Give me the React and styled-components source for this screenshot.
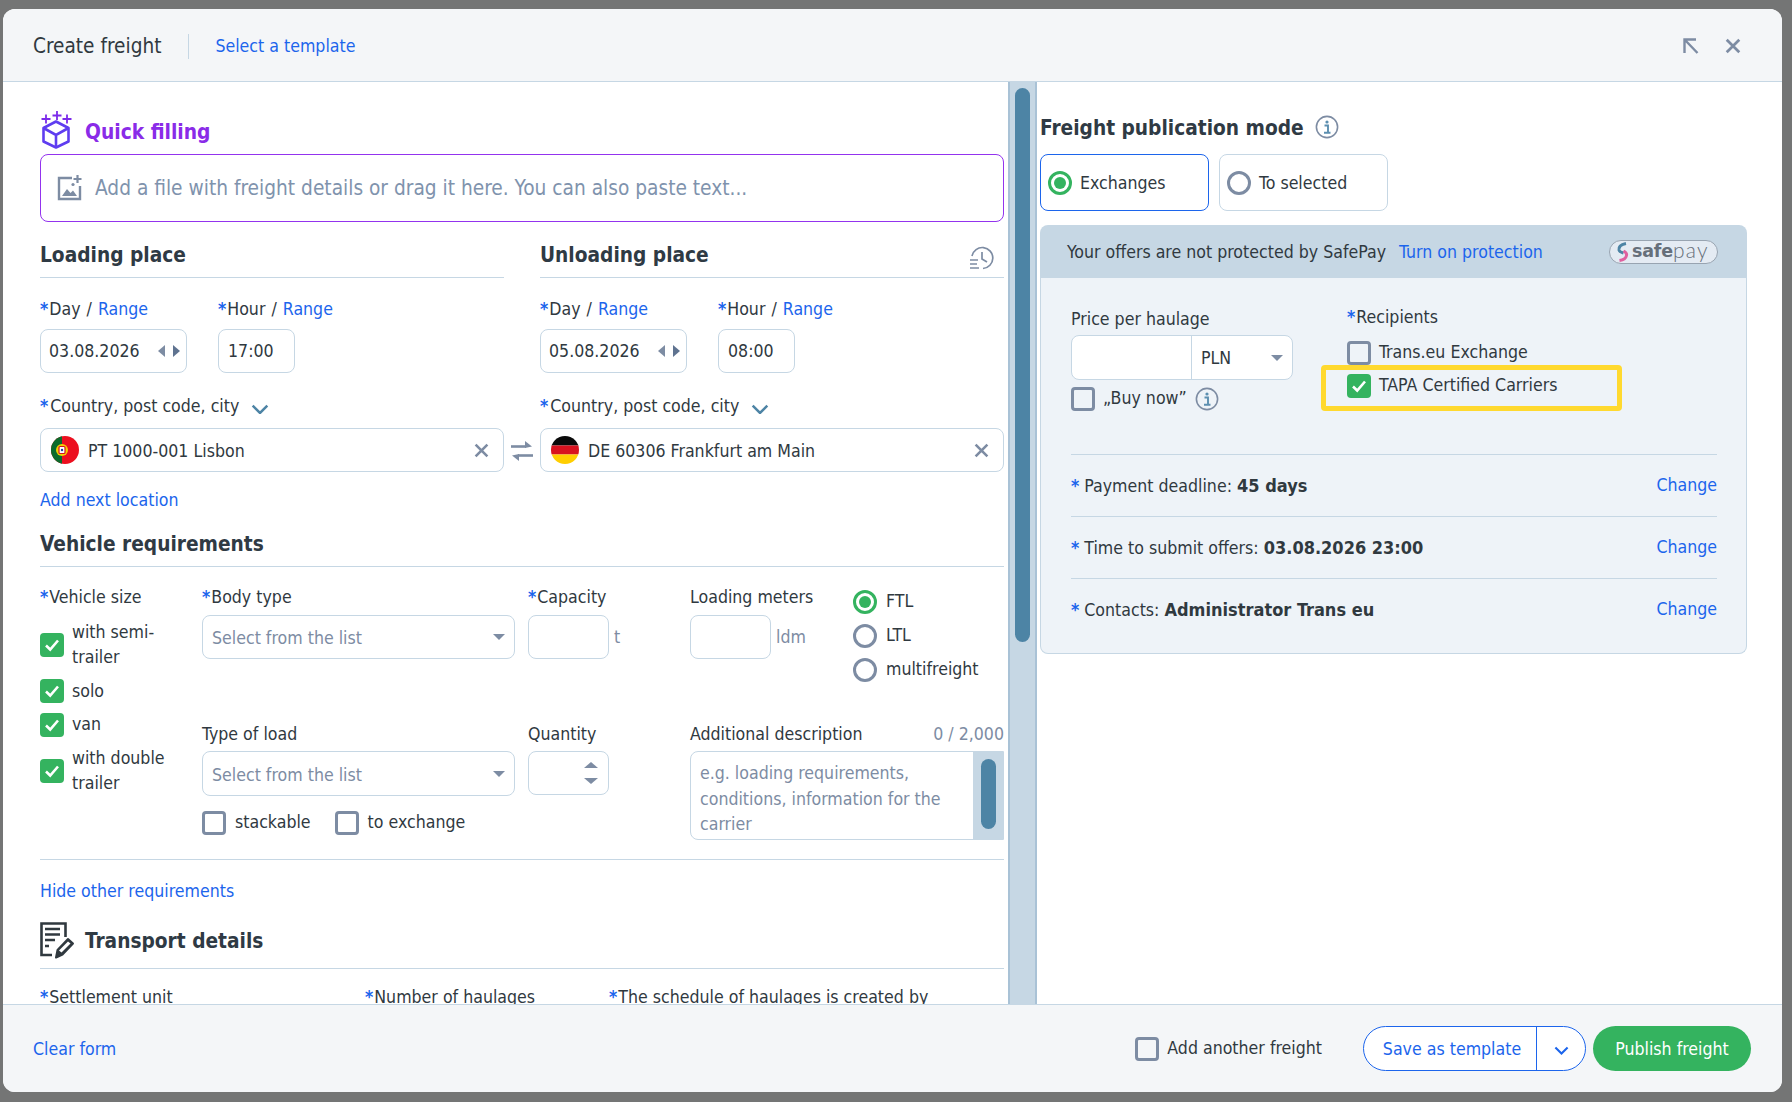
import React from 'react';
import styled, { createGlobalStyle } from 'styled-components';

const BLUE = '#1c65ec';
const LINE = '#c6d7e4';
const INK = '#30393f';
const GREEN = '#34b35f';
const SLATE = '#7d8ca3';

const Global = createGlobalStyle`
  html, body { margin: 0; padding: 0; }
  body {
    background: #747575;
    font-family: "DejaVu Sans Condensed", "DejaVu Sans", sans-serif;
    color: ${INK};
    font-size: 17.6px;
  }
  * { box-sizing: border-box; }
`;

const Backdrop = styled.div`
  width: 1792px;
  height: 1102px;
  padding: 9px 10px 10px 3px;
  overflow: hidden;
`;

const Modal = styled.div`
  height: 1083px;
  background: #fff;
  border-radius: 12px;
  display: flex;
  flex-direction: column;
  overflow: hidden;
`;

const Header = styled.header`
  height: 73px;
  flex: none;
  background: #f4f6f8;
  border-bottom: 1px solid ${LINE};
  display: flex;
  align-items: center;
  padding: 2px 41px 0 30px;
`;

const Title = styled.h1`
  margin: 0;
  font-size: 20.6px;
  font-weight: 400;
`;

const HeaderRule = styled.span`
  width: 1px;
  height: 25px;
  background: ${LINE};
  margin: 0 26px 0 27px;
`;

const Link = styled.a`
  color: ${BLUE};
  cursor: pointer;
`;

const HeaderIcons = styled.div`
  margin-left: auto;
  display: flex;
  align-items: center;
  gap: 26px;
`;

const Body = styled.div`
  flex: 1;
  min-height: 0;
  display: flex;
`;

const LeftPane = styled.div`
  width: 1005px;
  flex: none;
  padding: 29px 4px 0 37px;
  overflow: hidden;
`;

const Track = styled.div`
  width: 29px;
  flex: none;
  background: ${LINE};
  border-left: 2px solid #a9c2d6;
  border-right: 2px solid #a9c2d6;
  padding: 6px 5px 0;
`;

const Thumb = styled.div`
  width: 15px;
  height: 554px;
  background: #4d84a5;
  border-radius: 8px;
`;

const RightPane = styled.div`
  flex: 1;
  padding: 30px 35px 0 3px;
`;

const QuickRow = styled.div`
  height: 38px;
  display: flex;
  align-items: center;
  gap: 13px;
  font-size: 20.8px;
  font-weight: 700;
  color: #8a2be8;
`;

const QuickText = styled.span`
  padding-top: 4px;
`;

const DropZone = styled.div`
  margin-top: 5px;
  height: 68px;
  border: 1.5px solid #9333ee;
  border-radius: 8px;
  display: flex;
  align-items: center;
  gap: 13px;
  padding-left: 16px;
  font-size: 20.7px;
  color: #7f93ad;
`;

const PlaceGrid = styled.div`
  margin-top: 18px;
  display: grid;
  grid-template-columns: 464px 464px;
  column-gap: 36px;
`;

const PlaceColumn = styled.div`
  position: relative;
`;

const SectionTitle = styled.h2`
  margin: 0;
  height: ${p => p.$height || 38}px;
  border-bottom: 1px solid ${LINE};
  font-size: 20.7px;
  line-height: 30px;
  font-weight: 700;
  display: flex;
  align-items: flex-start;
  justify-content: space-between;
  color: #2f3a44;
`;

const HistorySlot = styled.span`
  margin: 5px 9px 0 0;
  line-height: 0;
`;

const DateRow = styled.div`
  margin-top: 20px;
  display: flex;
  gap: 31px;
`;

const Field = styled.div`
  width: ${p => p.$width ? `${p.$width}px` : 'auto'};
`;

const Label = styled.div`
  height: 22px;
  line-height: 22px;
  white-space: nowrap;
  display: flex;
  align-items: center;
`;

const Star = styled.span`
  color: ${BLUE};
  font-weight: 700;
  margin-right: ${p => p.$gap || 1}px;
`;

const Slash = styled.span`
  margin: 0 6px;
`;

const Box = styled.div`
  height: ${p => p.$height || 44}px;
  width: ${p => p.$width ? `${p.$width}px` : '100%'};
  margin-top: ${p => p.$top ?? 9}px;
  background: #fff;
  border: 1px solid ${LINE};
  border-radius: 8px;
  display: flex;
  align-items: center;
  padding: 0 9px;
  flex: none;
`;

const DateText = styled.span`
  margin-left: -1px;
`;

const Arrows = styled.span`
  margin: 0 -3px 0 auto;
  display: flex;
  gap: 8px;
`;

const CountryLabel = styled(Label)`
  margin-top: 22px;
  gap: 12px;
`;

const ChevronSlot = styled.span`
  line-height: 0;
  margin-top: ${p => p.$top || 0}px;
`;

const FlagSlot = styled.span`
  margin-left: 1px;
  line-height: 0;
`;

const PlaceName = styled.span`
  margin-left: 9px;
  padding-top: 2px;
  flex: 1;
`;

const ClearSlot = styled.span`
  line-height: 0;
  margin-right: 5px;
`;

const Swap = styled.span`
  position: absolute;
  right: -29px;
  bottom: 10px;
  line-height: 0;
`;

const AddLink = styled.div`
  margin-top: 17px;
  height: 22px;
  line-height: 22px;
`;

const VehicleTitle = styled(SectionTitle)`
  margin-top: 17px;
  line-height: 32px;
`;

const VehicleGrid = styled.div`
  margin-top: 19px;
  display: grid;
  grid-template-columns: 162px 326px 162px 314px;
  grid-template-rows: 137px 117px;
`;

const SizeColumn = styled.div`
  grid-row: 1 / span 2;
`;

const SizeList = styled.div`
  margin-top: 12px;
  display: flex;
  flex-direction: column;
  gap: 8.5px;
`;

const OptionRow = styled.label`
  display: flex;
  align-items: center;
  gap: 8px;
  line-height: 25px;
  min-height: 24px;
`;

const SizeText = styled.span`
  width: 100px;
`;

const CheckBox = styled.span`
  width: 24px;
  height: 24px;
  flex: none;
  border-radius: 4px;
  background: ${p => p.$on ? GREEN : 'transparent'};
  border: ${p => p.$on ? 'none' : `3px solid ${SLATE}`};
  display: inline-flex;
  align-items: center;
  justify-content: center;
`;

const RadioDot = styled.span`
  width: 24px;
  height: 24px;
  flex: none;
  border-radius: 50%;
  border: 3px solid ${p => p.$on ? GREEN : SLATE};
  display: inline-flex;
  align-items: center;
  justify-content: center;
  &::after {
    content: '';
    width: 12px;
    height: 12px;
    border-radius: 50%;
    background: ${p => p.$on ? GREEN : 'transparent'};
  }
`;

const Placeholder = styled.span`
  color: ${SLATE};
  padding-top: 2px;
`;

const Caret = styled.span`
  margin-left: auto;
  width: 0;
  height: 0;
  border-left: 6px solid transparent;
  border-right: 6px solid transparent;
  border-top: 6px solid ${SLATE};
`;

const Steppers = styled.span`
  margin-left: auto;
  display: flex;
  flex-direction: column;
  gap: 10px;
  margin-right: 1px;
`;

const Tri = styled.span`
  width: 0;
  height: 0;
  border-left: 7px solid transparent;
  border-right: 7px solid transparent;
  ${p => p.$up ? 'border-bottom' : 'border-top'}: 6px solid ${SLATE};
`;

const UnitRow = styled.div`
  margin-top: 7px;
  display: flex;
  align-items: center;
  gap: 5px;
  color: ${SLATE};
`;

const MetersRow = styled.div`
  display: flex;
`;

const MetersField = styled.div`
  width: 163px;
`;

const RadioList = styled.div`
  margin-top: 3px;
  display: flex;
  flex-direction: column;
  gap: 9px;
`;

const RadioOption = styled(OptionRow)`
  gap: 9px;
`;

const LoadOptions = styled.div`
  margin-top: 14px;
  display: flex;
  gap: 24px;
`;

const LoadOption = styled(OptionRow)`
  gap: 9px;
`;

const DescLabel = styled(Label)`
  justify-content: space-between;
`;

const Counter = styled.span`
  color: ${SLATE};
`;

const TextArea = styled.div`
  margin-top: 6px;
  height: 89px;
  border: 1px solid ${LINE};
  border-radius: 8px 0 0 8px;
  display: flex;
  overflow: hidden;
`;

const AreaText = styled.div`
  flex: 1;
  padding: 9px 9px 0;
  line-height: 25.5px;
  color: ${SLATE};
`;

const AreaTrack = styled.div`
  width: 30px;
  flex: none;
  background: ${LINE};
  padding: 7px 7px 0 8px;
`;

const AreaThumb = styled.div`
  height: 70px;
  background: #4d84a5;
  border-radius: 8px;
`;

const HideRow = styled.div`
  margin-top: 19px;
  border-top: 1px solid ${LINE};
  padding-top: 20px;
  height: 43px;
  line-height: 22px;
`;

const TransportTitle = styled.h2`
  margin: 18px 0 0;
  height: 49px;
  border-bottom: 1px solid ${LINE};
  display: flex;
  align-items: flex-start;
  gap: 9px;
  font-size: 20.7px;
  font-weight: 700;
  line-height: 42px;
  color: #2f3a44;
`;

const DocSlot = styled.span`
  margin-top: 2px;
  line-height: 0;
`;

const SettleRow = styled.div`
  margin-top: 17px;
  display: grid;
  grid-template-columns: 325px 244px 1fr;
`;

const ModeHeading = styled.h2`
  margin: 0;
  height: 30px;
  display: flex;
  align-items: center;
  gap: 11px;
  font-size: 20.7px;
  font-weight: 700;
  color: #2f3a44;
`;

const ModeText = styled.span`
  padding-top: 2px;
`;

const ModeCards = styled.div`
  margin-top: 12px;
  display: flex;
  gap: 10px;
`;

const ModeCard = styled.div`
  width: 169px;
  height: 57px;
  border: 1px solid ${p => p.$on ? BLUE : LINE};
  border-radius: 8px;
  display: flex;
  align-items: center;
  gap: 8px;
  padding-left: 7px;
`;

const Panel = styled.section`
  margin-top: 14px;
  width: 707px;
`;

const PanelTop = styled.div`
  height: 53px;
  background: ${LINE};
  border-radius: 8px 8px 0 0;
  display: flex;
  align-items: center;
  padding: 0 29px 0 27px;
  gap: 13px;
`;

const SafepayPill = styled.span`
  margin-left: auto;
  width: 109px;
  height: 24px;
  border: 1px solid #98a4b1;
  border-radius: 12px;
  background: #e4ebf3;
  display: flex;
  align-items: center;
  padding-left: 6px;
  gap: 3px;
  line-height: 1;
`;

const SafeWord = styled.b`
  font-family: "DejaVu Sans", sans-serif;
  font-size: 17.5px;
  font-weight: 700;
  color: #666f7a;
  letter-spacing: -0.2px;
`;

const PayWord = styled.span`
  font-family: Lato, sans-serif;
  font-size: 21px;
  font-weight: 300;
  color: #666f7a;
  margin: -4px 0 0 -3px;
  letter-spacing: 1.2px;
`;

const PanelBody = styled.div`
  background: #eef3f8;
  border: 1px solid ${LINE};
  border-top: none;
  border-radius: 0 0 8px 8px;
  padding: 28px 29px 13px 30px;
`;

const OfferGrid = styled.div`
  display: grid;
  grid-template-columns: 276px 1fr;
  margin-bottom: 43px;
`;

const PriceLabel = styled(Label)`
  margin-top: 2px;
`;

const PriceGroup = styled.div`
  margin-top: 5px;
  width: 222px;
  height: 45px;
  background: #fff;
  border: 1px solid ${LINE};
  border-radius: 8px;
  display: flex;
`;

const PriceInput = styled.div`
  width: 120px;
  border-right: 1px solid ${LINE};
`;

const Currency = styled.div`
  flex: 1;
  display: flex;
  align-items: center;
  padding: 0 9px;
`;

const BuyRow = styled(OptionRow)`
  margin-top: 6px;
`;

const RecipientList = styled.div`
  margin-top: 12px;
`;

const Highlight = styled.div`
  margin-left: -26px;
  width: 301px;
  height: 46px;
  border: 5px solid #ffd92f;
  border-radius: 4px;
  padding: 3px 0 0 21px;
`;

const TermRow = styled.div`
  height: 62px;
  border-top: 1px solid ${LINE};
  padding-bottom: 1px;
  display: flex;
  align-items: center;
  justify-content: space-between;
`;

const TermText = styled.span`
  b { font-weight: 700; font-size: 18px; }
`;

const Footer = styled.footer`
  height: 88px;
  flex: none;
  background: #f4f6f8;
  border-top: 1px solid ${LINE};
  display: flex;
  align-items: center;
  padding: 0 31px 0 30px;
`;

const FooterRight = styled.div`
  margin-left: auto;
  display: flex;
  align-items: center;
`;

const AnotherRow = styled(OptionRow)`
  gap: 8px;
  margin-right: 41px;
`;

const SplitButton = styled.div`
  width: 223px;
  height: 45px;
  background: #fff;
  border: 1px solid ${BLUE};
  border-radius: 23px;
  display: flex;
  align-items: center;
  color: ${BLUE};
  margin-right: 7px;
`;

const SplitMain = styled.span`
  width: 173px;
  height: 100%;
  border-right: 1px solid ${BLUE};
  display: flex;
  align-items: center;
  justify-content: center;
  padding-left: 4px;
`;

const SplitMore = styled.span`
  flex: 1;
  display: flex;
  align-items: center;
  justify-content: center;
  padding-top: 3px;
`;

const Publish = styled.button`
  width: 158px;
  height: 45px;
  border: none;
  border-radius: 23px;
  background: ${GREEN};
  color: #fff;
  font: inherit;
`;

const Tick = () => (
  <svg width="16" height="14" viewBox="0 0 16 14" fill="none">
    <path d="M2 7.5 6.2 11.5 14 2.5" stroke="#fff" strokeWidth="2.6" />
  </svg>
);

const Check = ({ on }) => <CheckBox $on={on}>{on && <Tick />}</CheckBox>;

const CloseIcon = ({ size = 15, color = SLATE }) => (
  <svg width={size} height={size} viewBox="0 0 14 14" fill="none">
    <path d="M1.5 1.5 12.5 12.5M12.5 1.5 1.5 12.5" stroke={color} strokeWidth="2.4" />
  </svg>
);

const Chevron = ({ color = '#4d84a5', width = 18 }) => (
  <svg width={width} height={width * 0.6} viewBox="0 0 16 9.6" fill="none">
    <path d="M1.5 1.5 8 8 14.5 1.5" stroke={color} strokeWidth="2.2" />
  </svg>
);

const InfoIcon = () => (
  <svg width="24" height="24" viewBox="0 0 24 24" fill="none">
    <circle cx="12" cy="12" r="10.6" stroke={SLATE} strokeWidth="1.6" />
    <circle cx="12" cy="7" r="1.6" fill="#5c8fb0" />
    <path d="M9.5 10.5H13V17.5M9 17.8H15.5" stroke="#5c8fb0" strokeWidth="1.9" />
  </svg>
);

const DateArrows = () => (
  <Arrows>
    <svg width="7" height="12" viewBox="0 0 7 12"><path d="M7 0V12L0 6Z" fill={SLATE} /></svg>
    <svg width="7" height="12" viewBox="0 0 7 12"><path d="M0 0V12L7 6Z" fill="#5f7390" /></svg>
  </Arrows>
);

const CubeIcon = () => (
  <svg width="32" height="38" viewBox="0 0 32 38" fill="none">
    <path d="M16 10.5 28.5 17V30.5L16 36.5 3.5 30.5V17Z" stroke="#5f3df0" strokeWidth="2.6" strokeLinejoin="round" />
    <path d="M3.5 17 16 24 28.5 17M16 24V36" stroke="#5f3df0" strokeWidth="2.6" />
    <path d="M17 0V9M12.5 4.5H21.5M6 3.5V12.5M1.5 8H10.5M27 3.5V12.5M22.5 8H31.5" stroke="#7c2bea" strokeWidth="1.8" />
  </svg>
);

const ImageAddIcon = () => (
  <svg width="25" height="26" viewBox="0 0 25 26" fill="none">
    <path d="M15 3H2V24H23V11" stroke={SLATE} strokeWidth="2.4" />
    <path d="M20.5 0V8M16.5 4H24.5" stroke={SLATE} strokeWidth="2.2" />
    <path d="M5 21 10 14 13.5 18 16 15.5 20 21Z" fill={SLATE} />
    <circle cx="16" cy="9.5" r="1.6" fill={SLATE} />
  </svg>
);

const HistoryIcon = () => (
  <svg width="26" height="26" viewBox="0 0 26 26" fill="none">
    <path d="M3 11A10.5 10.5 0 1 1 14 23.5" stroke={SLATE} strokeWidth="1.7" />
    <path d="M13 7V14L18 17" stroke={SLATE} strokeWidth="1.7" />
    <path d="M1 15H9M1 19H8M1 23H10" stroke={SLATE} strokeWidth="1.7" />
  </svg>
);

const SwapIcon = () => (
  <svg width="22" height="22" viewBox="0 0 22 22" fill="none">
    <path d="M0 6.5H15" stroke={SLATE} strokeWidth="2.6" />
    <path d="M14 1 21 6.5 14 8Z" fill={SLATE} />
    <path d="M22 15.5H7" stroke={SLATE} strokeWidth="2.6" />
    <path d="M8 14 1 15.5 8 21Z" fill={SLATE} />
  </svg>
);

const ExpandIcon = () => (
  <svg width="16" height="16" viewBox="0 0 16 16" fill="none">
    <path d="M1.5 15V1.5H13M2 2 14.5 15" stroke={SLATE} strokeWidth="2.4" />
  </svg>
);

const PortugalFlag = () => (
  <svg width="28" height="28" viewBox="0 0 28 28">
    <defs><clipPath id="ptc"><circle cx="14" cy="14" r="14" /></clipPath></defs>
    <g clipPath="url(#ptc)">
      <rect width="28" height="28" fill="#ec0f1f" />
      <rect width="11" height="28" fill="#0b6b2c" />
      <circle cx="11" cy="14" r="6" fill="#f5d000" />
      <rect x="8" y="10.5" width="6" height="7" rx="1" fill="#fff" stroke="#d8121f" strokeWidth="1.2" />
      <circle cx="11" cy="14" r="1.2" fill="#1f3f9e" />
    </g>
  </svg>
);

const GermanyFlag = () => (
  <svg width="28" height="28" viewBox="0 0 28 28">
    <defs><clipPath id="dec"><circle cx="14" cy="14" r="14" /></clipPath></defs>
    <g clipPath="url(#dec)">
      <rect width="28" height="9.5" fill="#0a0a0a" />
      <rect y="9.5" width="28" height="9" fill="#d8121f" />
      <rect y="18.5" width="28" height="9.5" fill="#ffce00" />
    </g>
  </svg>
);

const DocPenIcon = () => (
  <svg width="36" height="37" viewBox="0 0 36 37" fill="none">
    <path d="M25.5 15V1.5H1.5V33H12" stroke="#30393f" strokeWidth="2.6" />
    <path d="M5 7H20M5 12.5H20M5 18H15M5 24H9" stroke="#30393f" strokeWidth="2.6" />
    <path d="M16 35.5 17.5 28 28 17 33 21.5 22.5 32.5Z" fill="#30393f" stroke="#30393f" strokeWidth="2" strokeLinejoin="round" />
    <path d="M19 28.5 28 19.5 30.5 21.5 21.5 30.5Z" fill="#fff" />
  </svg>
);

const SafepayMark = () => (
  <svg width="13" height="20" viewBox="0 0 13 20" fill="none">
    <path d="M10 1.5C5 2.5 2.5 5 3 8C3.4 10 6 10.6 7.5 11" stroke="#4d84a5" strokeWidth="3" />
    <path d="M7.5 9C9.5 10 11 11.5 10.5 13.5C10 16 7 18 3.5 18.5" stroke="#e0609f" strokeWidth="3" />
  </svg>
);

const DayHourRow = ({ date, hour }) => (
  <DateRow>
    <Field $width={147}>
      <Label><Star>*</Star>Day<Slash>/</Slash><Link>Range</Link></Label>
      <Box><DateText>{date}</DateText><DateArrows /></Box>
    </Field>
    <Field $width={77}>
      <Label><Star>*</Star>Hour<Slash>/</Slash><Link>Range</Link></Label>
      <Box><span>{hour}</span></Box>
    </Field>
  </DateRow>
);

const CountryField = ({ flag, name }) => (
  <>
    <CountryLabel>
      <span><Star $gap={2}>*</Star>Country, post code, city</span>
      <ChevronSlot $top={6}><Chevron /></ChevronSlot>
    </CountryLabel>
    <Box $top={11}>
      <FlagSlot>{flag}</FlagSlot>
      <PlaceName>{name}</PlaceName>
      <ClearSlot><CloseIcon /></ClearSlot>
    </Box>
  </>
);

const sizes = ['with semi-trailer', 'solo', 'van', 'with double trailer'];
const terms = [
  ['Payment deadline: ', '45 days'],
  ['Time to submit offers: ', '03.08.2026 23:00'],
  ['Contacts: ', 'Administrator Trans eu'],
];

const App = () => (
  <>
    <Global />
    <Backdrop>
      <Modal>
        <Header>
          <Title>Create freight</Title>
          <HeaderRule />
          <Link>Select a template</Link>
          <HeaderIcons>
            <ExpandIcon />
            <CloseIcon size={16} />
          </HeaderIcons>
        </Header>
        <Body>
          <LeftPane>
            <QuickRow><CubeIcon /><QuickText>Quick filling</QuickText></QuickRow>
            <DropZone>
              <ImageAddIcon />
              Add a file with freight details or drag it here. You can also paste text...
            </DropZone>

            <PlaceGrid>
              <PlaceColumn>
                <SectionTitle>Loading place</SectionTitle>
                <DayHourRow date="03.08.2026" hour="17:00" />
                <CountryField flag={<PortugalFlag />} name="PT 1000-001 Lisbon" />
                <Swap><SwapIcon /></Swap>
              </PlaceColumn>
              <PlaceColumn>
                <SectionTitle>Unloading place<HistorySlot><HistoryIcon /></HistorySlot></SectionTitle>
                <DayHourRow date="05.08.2026" hour="08:00" />
                <CountryField flag={<GermanyFlag />} name="DE 60306 Frankfurt am Main" />
              </PlaceColumn>
            </PlaceGrid>

            <AddLink><Link>Add next location</Link></AddLink>

            <VehicleTitle $height={39}>Vehicle requirements</VehicleTitle>
            <VehicleGrid>
              <SizeColumn>
                <Label><Star>*</Star>Vehicle size</Label>
                <SizeList>
                  {sizes.map(size => (
                    <OptionRow key={size}>
                      <Check on />
                      <SizeText>{size}</SizeText>
                    </OptionRow>
                  ))}
                </SizeList>
              </SizeColumn>
              <Field>
                <Label><Star>*</Star>Body type</Label>
                <Box $width={313} $top={7}><Placeholder>Select from the list</Placeholder><Caret /></Box>
              </Field>
              <Field>
                <Label><Star>*</Star>Capacity</Label>
                <UnitRow><Box $width={81} $top={0} />t</UnitRow>
              </Field>
              <MetersRow>
                <MetersField>
                  <Label>Loading meters</Label>
                  <UnitRow><Box $width={81} $top={0} />ldm</UnitRow>
                </MetersField>
                <RadioList>
                  <RadioOption><RadioDot $on />FTL</RadioOption>
                  <RadioOption><RadioDot />LTL</RadioOption>
                  <RadioOption><RadioDot />multifreight</RadioOption>
                </RadioList>
              </MetersRow>
              <Field>
                <Label>Type of load</Label>
                <Box $width={313} $top={6} $height={45}><Placeholder>Select from the list</Placeholder><Caret /></Box>
                <LoadOptions>
                  <LoadOption><Check />stackable</LoadOption>
                  <LoadOption><Check />to exchange</LoadOption>
                </LoadOptions>
              </Field>
              <Field>
                <Label>Quantity</Label>
                <Box $width={81} $top={6}>
                  <Steppers><Tri $up /><Tri /></Steppers>
                </Box>
              </Field>
              <Field>
                <DescLabel>Additional description<Counter>0 / 2,000</Counter></DescLabel>
                <TextArea>
                  <AreaText>e.g. loading requirements, conditions, information for the carrier</AreaText>
                  <AreaTrack><AreaThumb /></AreaTrack>
                </TextArea>
              </Field>
            </VehicleGrid>

            <HideRow><Link>Hide other requirements</Link></HideRow>

            <TransportTitle><DocSlot><DocPenIcon /></DocSlot>Transport details</TransportTitle>
            <SettleRow>
              <Label><Star>*</Star>Settlement unit</Label>
              <Label><Star>*</Star>Number of haulages</Label>
              <Label><Star>*</Star>The schedule of haulages is created by</Label>
            </SettleRow>
          </LeftPane>

          <Track><Thumb /></Track>

          <RightPane>
            <ModeHeading><ModeText>Freight publication mode</ModeText><InfoIcon /></ModeHeading>
            <ModeCards>
              <ModeCard $on><RadioDot $on />Exchanges</ModeCard>
              <ModeCard><RadioDot />To selected</ModeCard>
            </ModeCards>
            <Panel>
              <PanelTop>
                <span>Your offers are not protected by SafePay</span>
                <Link>Turn on protection</Link>
                <SafepayPill><SafepayMark /><SafeWord>safe</SafeWord><PayWord>pay</PayWord></SafepayPill>
              </PanelTop>
              <PanelBody>
                <OfferGrid>
                  <div>
                    <PriceLabel>Price per haulage</PriceLabel>
                    <PriceGroup>
                      <PriceInput />
                      <Currency>PLN<Caret /></Currency>
                    </PriceGroup>
                    <BuyRow><Check />„Buy now”<InfoIcon /></BuyRow>
                  </div>
                  <div>
                    <Label><Star>*</Star>Recipients</Label>
                    <RecipientList>
                      <OptionRow><Check />Trans.eu Exchange</OptionRow>
                      <Highlight>
                        <OptionRow><Check on />TAPA Certified Carriers</OptionRow>
                      </Highlight>
                    </RecipientList>
                  </div>
                </OfferGrid>
                {terms.map(([label, value]) => (
                  <TermRow key={label}>
                    <TermText><Star $gap={5}>*</Star>{label}<b>{value}</b></TermText>
                    <Link>Change</Link>
                  </TermRow>
                ))}
              </PanelBody>
            </Panel>
          </RightPane>
        </Body>
        <Footer>
          <Link>Clear form</Link>
          <FooterRight>
            <AnotherRow><Check />Add another freight</AnotherRow>
            <SplitButton>
              <SplitMain>Save as template</SplitMain>
              <SplitMore><Chevron color={BLUE} width={15} /></SplitMore>
            </SplitButton>
            <Publish>Publish freight</Publish>
          </FooterRight>
        </Footer>
      </Modal>
    </Backdrop>
  </>
);

export default App;
